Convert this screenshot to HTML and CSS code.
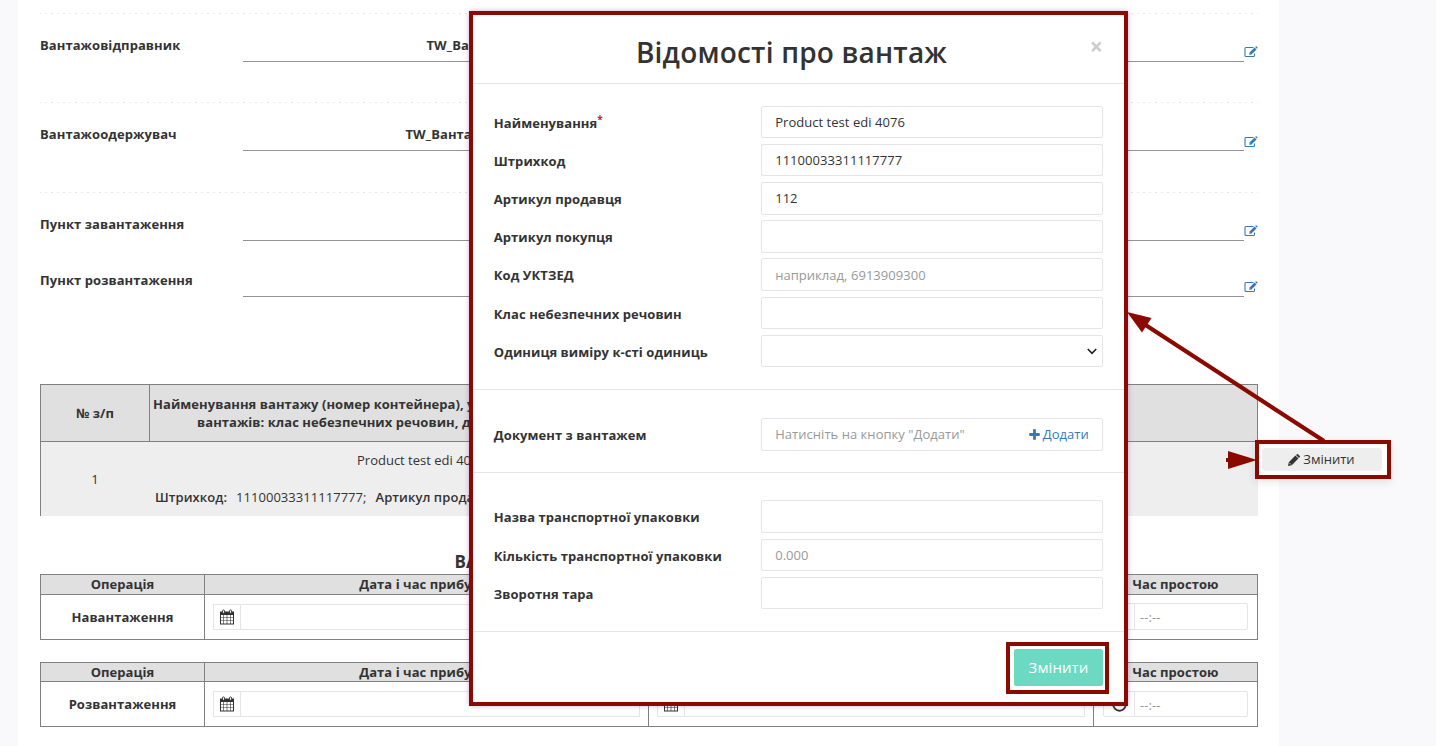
FILE: index.html
```html
<!DOCTYPE html>
<html lang="uk">
<head>
<meta charset="utf-8">
<title>Відомості про вантаж</title>
<link rel="stylesheet" href="styles.css">
</head>
<body>
<svg class="defs" width="0" height="0">
  <symbol id="edit" viewBox="0 0 14 12">
    <path d="M10.500 7.500v1.900q0 1.100-1.100 1.100H2.100Q1 10.500 1 9.400V2.600q0-1.100 1.100-1.100H9.500" fill="none" stroke="currentColor" stroke-width="1.100"/>
    <path d="M5.300 6.700 10.600 1.500l1.900 1.900L7.200 8.700H5.300z" fill="currentColor"/>
    <path d="M11.200.9 11.600.5q.5-.4 1 0l.8.8q.4.500 0 1l-.4.4z" fill="currentColor"/>
    <path d="M5.900 7.500l.5.500" stroke="#fff" stroke-width=".6"/>
  </symbol>
  <symbol id="calendar" viewBox="0 0 15 16">
    <path d="M0 2.500h14V15.500H0z" fill="currentColor"/>
    <path d="M1 6h2.400v2.400H1zM4 6h2.700v2.400H4zM7.300 6h2.700v2.400H7.300zM10.600 6H13v2.400h-2.400zM1 9h2.400v2.400H1zM4 9h2.700v2.400H4zM7.300 9h2.700v2.400H7.300zM10.600 9H13v2.400h-2.400zM1 12h2.400v2.500H1zM4 12h2.700v2.500H4zM7.300 12h2.700v2.500H7.300zM10.600 12H13v2.500h-2.400z" fill="#fff"/>
    <rect x="2.500" y=".9" width="2" height="3.400" rx="1" fill="#fff" stroke="currentColor" stroke-width=".9"/>
    <rect x="9.500" y=".9" width="2" height="3.400" rx="1" fill="#fff" stroke="currentColor" stroke-width=".9"/>
  </symbol>
  <symbol id="clock" viewBox="0 0 14 14">
    <circle cx="7" cy="7" r="5.800" fill="none" stroke="currentColor" stroke-width="1.800"/>
    <path d="M7.500 3.800v4H4.800" fill="none" stroke="currentColor"/>
  </symbol>
</svg>

<main class="sheet">
  <section class="party">
    <span class="label">Вантажовідправник</span>
    <div class="line sender">TW_Ванта</div>
    <svg class="edit"><use href="#edit"/></svg>
  </section>
  <section class="party tall">
    <span class="label">Вантажоодержувач</span>
    <div class="line receiver">TW_Вантаж</div>
    <svg class="edit"><use href="#edit"/></svg>
  </section>
  <section class="party point">
    <span class="label">Пункт завантаження</span>
    <div class="line"></div>
    <svg class="edit"><use href="#edit"/></svg>
  </section>
  <section class="party last">
    <span class="label">Пункт розвантаження</span>
    <div class="line"></div>
    <svg class="edit"><use href="#edit"/></svg>
  </section>

  <section class="goods">
    <div class="goods-head">
      <div class="num">№ з/п</div>
      <div class="desc">
        <p class="d1">Найменування вантажу (номер контейнера), у</p>
        <p class="d2">вантажів: клас небезпечних речовин, до</p>
      </div>
    </div>
    <div class="goods-row">
      <div class="num">1</div>
      <div class="desc">
        <p class="g1">Product test edi 4076</p>
        <p class="g2"><b>Штрихкод:</b><span>11100033311117777;</span><b>Артикул продав</b></p>
      </div>
    </div>
  </section>

  <h2 class="ops-title">ВАН</h2>

  <section class="ops">
    <div class="th">Операція</div><div class="th">Дата і час прибуття</div><div class="th">Дата і час вибуття</div><div class="th">Час простою</div>
    <div class="td name">Навантаження</div>
    <div class="td"><div class="group"><i><svg class="cal"><use href="#calendar"/></svg></i></div></div>
    <div class="td"><div class="group"><i><svg class="cal"><use href="#calendar"/></svg></i></div></div>
    <div class="td time"><div class="group"><i><svg class="clock"><use href="#clock"/></svg></i><span>--:--</span></div></div>
  </section>
  <section class="ops second">
    <div class="th">Операція</div><div class="th">Дата і час прибуття</div><div class="th">Дата і час вибуття</div><div class="th">Час простою</div>
    <div class="td name">Розвантаження</div>
    <div class="td"><div class="group"><i><svg class="cal"><use href="#calendar"/></svg></i></div></div>
    <div class="td"><div class="group"><i><svg class="cal"><use href="#calendar"/></svg></i></div></div>
    <div class="td time"><div class="group"><i><svg class="clock"><use href="#clock"/></svg></i><span>--:--</span></div></div>
  </section>
</main>

<div class="row-action">
  <div class="row-button">
    <svg width="12" height="12" viewBox="0 0 12 12"><path d="M0 12l.8-3.800L7.400 1.600l3 3L3.800 11.200zM8 1l1-.8q.5-.4 1 0L11.800 2q.4.500 0 1L11 4z" fill="currentColor"/><path d="M1.500 9l1.500 1.500" stroke="#eee" stroke-width=".8"/></svg>
    <span>Змінити</span>
  </div>
</div>

<div class="modal">
  <header>
    <h1>Відомості про вантаж</h1>
    <span class="close">×</span>
  </header>
  <section class="main-fields">
    <div class="row"><span>Найменування<sup>*</sup></span><div class="input">Product test edi 4076</div></div>
    <div class="row"><span>Штрихкод</span><div class="input">11100033311117777</div></div>
    <div class="row"><span>Артикул продавця</span><div class="input">112</div></div>
    <div class="row"><span>Артикул покупця</span><div class="input"></div></div>
    <div class="row"><span>Код УКТЗЕД</span><div class="input hint">наприклад, 6913909300</div></div>
    <div class="row"><span>Клас небезпечних речовин</span><div class="input"></div></div>
    <div class="row"><span>Одиниця виміру к-сті одиниць</span><div class="input select"><svg width="10" height="7" viewBox="0 0 10 7"><path d="M.8 1 5 5.300 9.200 1" fill="none" stroke="#222" stroke-width="1.700"/></svg></div></div>
  </section>
  <section class="doc-fields">
    <div class="row"><span>Документ з вантажем</span><div class="input hint doc">Натисніть на кнопку "Додати"<a><svg width="11" height="11" viewBox="0 0 11 11"><path d="M5.500.3v10.400M.3 5.500h10.400" stroke="currentColor" stroke-width="2.800"/></svg>Додати</a></div></div>
  </section>
  <section class="pack-fields">
    <div class="row"><span>Назва транспортної упаковки</span><div class="input"></div></div>
    <div class="row"><span>Кількість транспортної упаковки</span><div class="input hint">0.000</div></div>
    <div class="row"><span>Зворотня тара</span><div class="input"></div></div>
  </section>
  <footer><div class="mark"><div class="submit">Змінити</div></div></footer>
</div>

<svg class="arrows" width="1436" height="746" viewBox="0 0 1436 746">
  <path d="M1324 441 1144 324" stroke="#8b0a00" stroke-width="4.200"/>
  <path d="M1127 312 1151.500 318 1142 332.500z" fill="#8b0a00"/>
  <path d="M1257 460 1228 469v-7h-2v-4h2v-7z" fill="#8b0a00"/>
</svg>
</body>
</html>
```
FILE: styles.css
```css
* { box-sizing: border-box; margin: 0; padding: 0; }
body {
  position: relative;
  width: 1436px;
  height: 746px;
  overflow: hidden;
  background: #f9f9fc;
  color: #333;
  font: 13px/18px "Open Sans", sans-serif;
}
.defs { position: absolute; }
b { font-weight: 600; letter-spacing: .07px; }

.sheet { width: 1261px; height: 746px; margin-left: 18px; padding: 13px 21px 0 22px; background: #fff; }
.party {
  display: grid;
  grid-template-columns: 203px 1001px 14px;
  align-items: start;
  height: 89px;
  padding-top: 23px;
  background: repeating-linear-gradient(90deg, #e7e7e7 0 1px, transparent 1px 5px, #e7e7e7 5px 6px) 0 0 / 100% 1px no-repeat;
}
.label, .line { font-weight: 700; letter-spacing: .07px; }
.line { height: 26px; border-bottom: 1px solid #949494; }
.sender { padding-left: 183.500px; white-space: nowrap; }
.receiver { padding-left: 162.500px; white-space: nowrap; }
.edit { display: block; width: 14px; height: 12px; margin-top: 10px; color: #337ab7; }
.tall { height: 90px; }
.tall .edit { margin-top: 11px; }
.point { height: 56px; padding-bottom: 0; }
.point + .last { height: 136px; background: none; }

.goods { height: 132px; overflow: hidden; }
.goods-head, .goods-row { display: grid; grid-template-columns: 108px 1fr; }
.goods-head { height: 58px; background: #e0e0e0; border: 1px solid #808080; font-weight: 700; grid-template-columns: 109px 1fr; }
.num { display: flex; align-items: center; justify-content: center; }
.goods-head .num { border-right: 1px solid #808080; }
.desc { white-space: nowrap; overflow: hidden; }
.goods-head .desc { padding: 10px 0 0 3px; letter-spacing: .05px; }
.d2 { padding-left: 44px; }
.goods-row { height: 74px; background: #eee; border-left: 1px solid #808080; }
.goods-row .desc { padding-top: 9px; }
.g1 { padding-left: 208px; }
.g2 { display: flex; gap: 9px; padding: 19px 0 0 6px; letter-spacing: .04px; }

.ops-title { height: 58px; padding: 34px 0 0 414.500px; font-size: 17px; line-height: 24px; font-weight: 700; white-space: nowrap; }
.ops {
  display: grid;
  grid-template-columns: 164px 444px 445px 164px;
  grid-template-rows: 20px 45px;
  width: 1218px;
  height: 66px;
  border: solid #808080;
  border-width: 1px 0 0 1px;
  font-weight: 700;
  letter-spacing: .05px;
}
.ops > div { border: solid #808080; border-width: 0 1px 1px 0; }
.th { background: #e0e0e0; text-align: center; line-height: 19px; }
.td { padding: 9px 8px; }
.td.name { display: flex; align-items: center; justify-content: center; padding: 0; }
.group { display: flex; height: 26px; border: 1px solid #e5e5e5; }
.group i { display: flex; align-items: center; justify-content: center; width: 27px; border-right: 1px solid #e5e5e5; }
.group span { padding-left: 5px; line-height: 26px; color: #999; font-weight: 400; }
.time { padding: 8px 9px; }
.time .group { height: 27px; border-radius: 2px; }
.time i { width: 31px; }
.cal { width: 15px; height: 16px; }
.clock { width: 15px; height: 15px; }
.second { grid-template-rows: 19px 45px; height: 65px; margin-top: 22px; }
.second .th { line-height: 19px; }
.second .time { padding-top: 9px; }
.second .group, .second .time .group { height: 26px; }

.row-action {
  position: absolute;
  left: 1255px;
  top: 440px;
  width: 136px;
  height: 39px;
  padding: 4px 5px 4px 3px;
  border: 4px solid #8b0a00;
  background: #fff;
  box-shadow: 0 3px 9px rgba(0, 0, 0, .1);
}
.row-button { display: flex; align-items: center; justify-content: center; gap: 3px; width: 120px; height: 23px; padding-right: 1px; border-radius: 4px; background: #eee; }
.row-button span { margin-top: -1px; }

.modal {
  position: absolute;
  left: 469px;
  top: 11px;
  width: 659px;
  height: 695px;
  border: 4px solid #8b0a00;
  background: #fff;
  box-shadow: 0 0 5px rgba(90, 0, 140, .3);
}
.modal header, .modal section { border-bottom: 1px solid #e5e5e5; }
.modal header { position: relative; height: 69px; }
h1 { padding: 17px 14px 0 0; text-align: center; font-size: 28px; line-height: 40px; font-weight: 600; letter-spacing: .2px; }
.close { position: absolute; right: 21px; top: 20px; color: #ccc; font-size: 23px; line-height: 23px; font-weight: 700; }
.modal section { padding-left: 20.800px; }
.main-fields { height: 306px; padding-top: 21.800px; }
.doc-fields { height: 83px; padding-top: 28px; }
.pack-fields { height: 159px; padding-top: 27.400px; }
.row { display: grid; grid-template-columns: 267.200px 342px; height: 38.170px; font-weight: 700; letter-spacing: .06px; }
.row > span { padding-top: 8px; }
.input { display: flex; align-items: center; height: 32.500px; padding: 0 13.200px; border: 1px solid #e5e5e5; border-radius: 2px; font-weight: 400; letter-spacing: .04px; white-space: nowrap; }
.hint { color: #999; }
.select { justify-content: flex-end; padding: 1px 5px 0 0; }
.doc { justify-content: space-between; }
.doc a { display: flex; align-items: center; gap: 3px; color: #337ab7; }
sup { position: relative; top: 0; color: #dc143c; font-size: 10px; line-height: 0; vertical-align: 5px; }
footer { display: flex; justify-content: flex-end; padding: 10px 15px 0 0; }
.mark { width: 103px; height: 52px; padding: 3px 2px 4px 4px; border: 4px solid #8b0a00; }
.submit { width: 89px; height: 37px; border-radius: 2px; background: #6dd9c2; color: #fff; font-size: 15px; line-height: 37px; text-align: center; letter-spacing: .1px; }

.arrows { position: absolute; left: 0; top: 0; }
```
